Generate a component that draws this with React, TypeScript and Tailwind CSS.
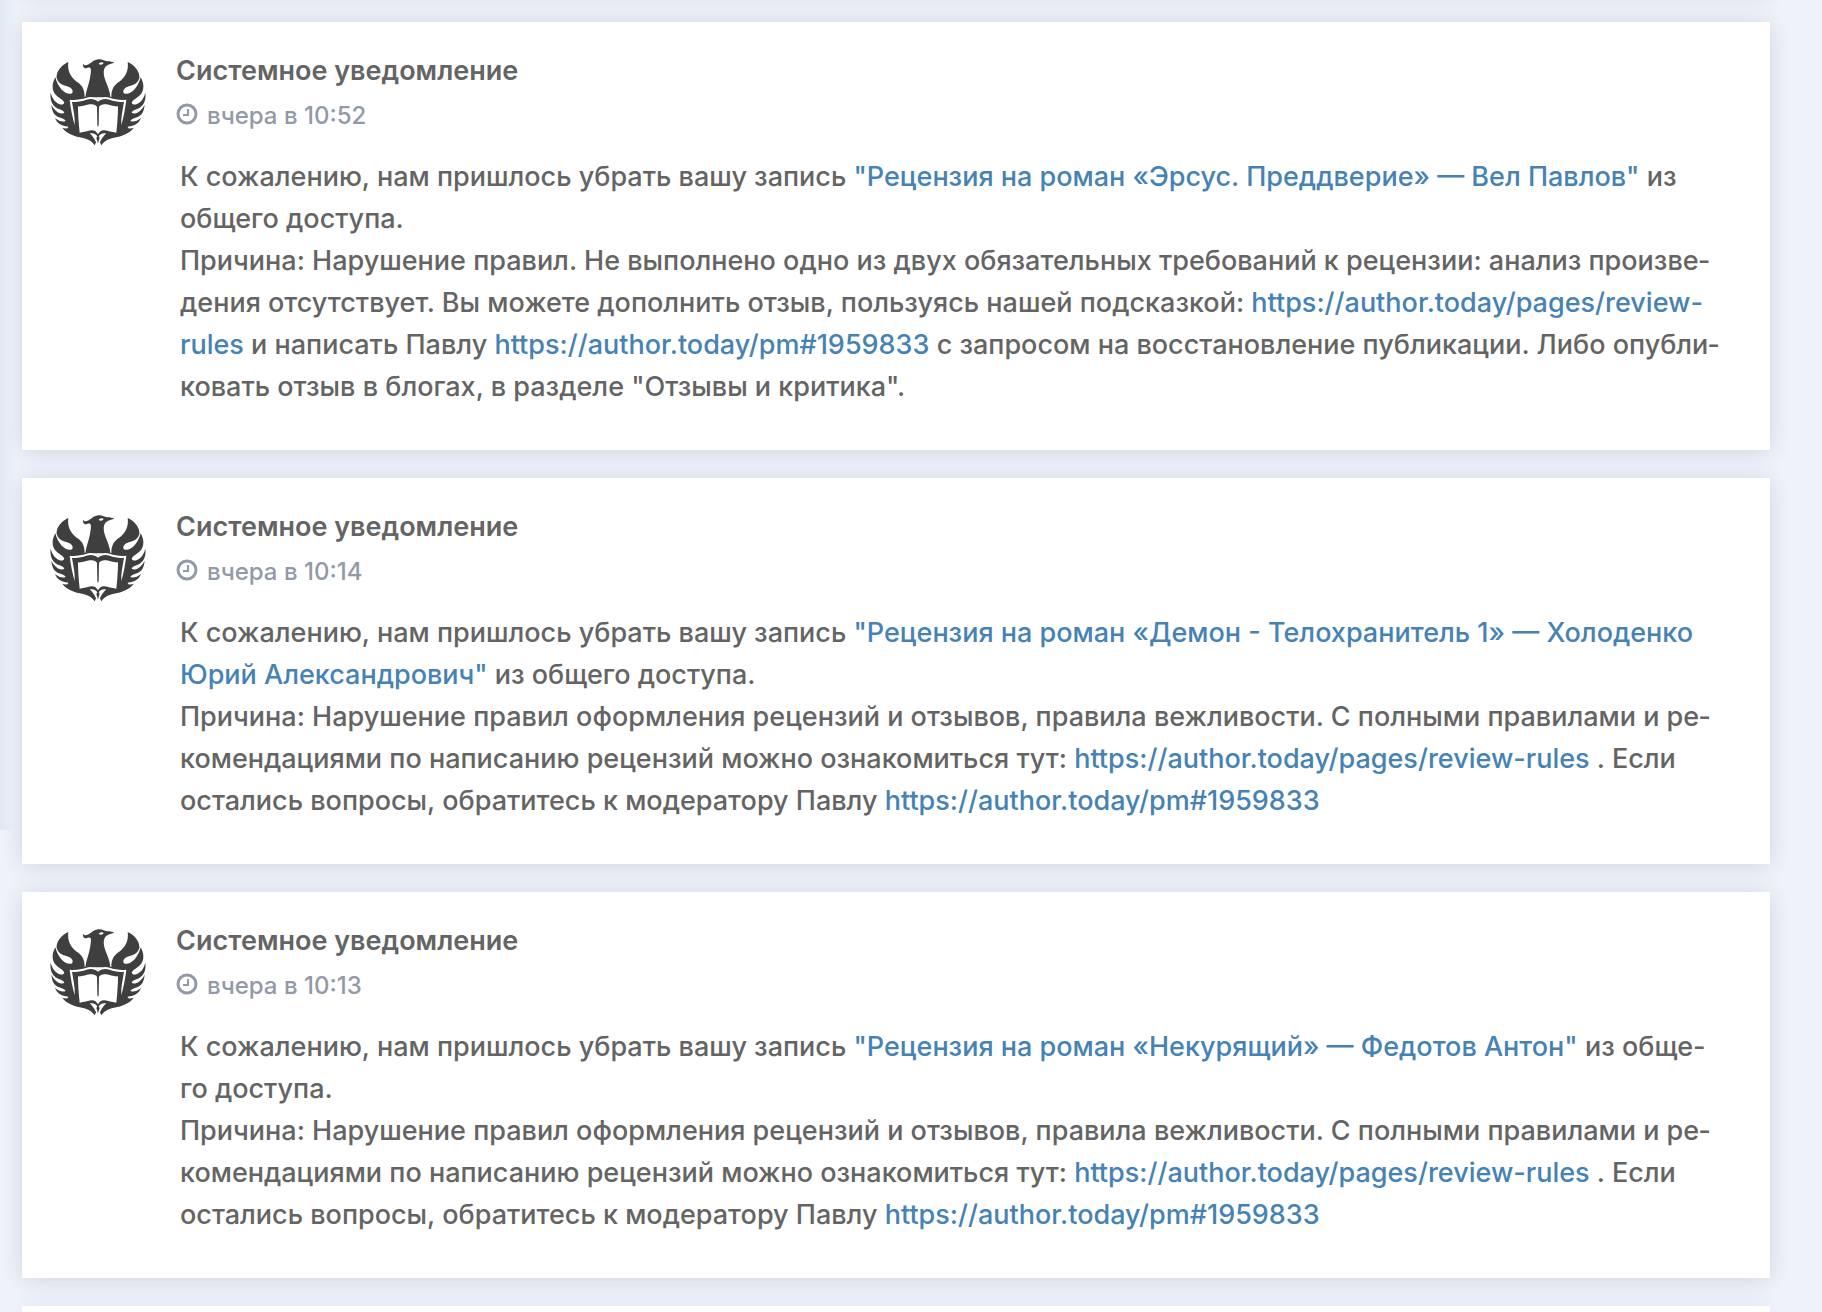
import type { ReactNode } from "react";

type Notice = {
  id: number;
  time: string;
  text: ReactNode;
};

function Link({ href, children }: { href: string; children: ReactNode }) {
  return (
    <a href={href} className="text-[#4682b4] hover:underline">
      {children}
    </a>
  );
}

const RULES = "https://author.today/pages/review-rules";
const PM = "https://author.today/pm#1959833";

const notices: Notice[] = [
  {
    id: 1,
    time: "вчера в 10:52",
    text: (
      <>
        К сожалению, нам пришлось убрать вашу запись{" "}
        <Link href="#post-1">"Рецензия на роман «Эрсус. Преддверие» — Вел Павлов"</Link> из общего
        доступа.
        <br />
        Причина: Нарушение правил. Не выполнено одно из двух обязательных требований к рецензии:
        анализ произве&shy;дения отсутствует. Вы можете дополнить отзыв, пользуясь нашей
        подсказкой: <Link href={RULES}>{RULES}</Link> и написать Павлу <Link href={PM}>{PM}</Link> с
        запросом на восстановление публикации. Либо опубли&shy;ковать отзыв в блогах, в разделе
        "Отзывы и критика".
      </>
    ),
  },
  {
    id: 2,
    time: "вчера в 10:14",
    text: (
      <>
        К сожалению, нам пришлось убрать вашу запись{" "}
        <Link href="#post-2">
          "Рецензия на роман «Демон - Телохранитель 1» — Холоденко Юрий Александрович"
        </Link>{" "}
        из общего доступа.
        <br />
        Причина: Нарушение правил оформления рецензий и отзывов, правила вежливости. С полными
        правилами и ре&shy;комендациями по написанию рецензий можно ознакомиться тут:{" "}
        <Link href={RULES}>{RULES}</Link> . Если остались вопросы, обратитесь к модератору Павлу{" "}
        <Link href={PM}>{PM}</Link>
      </>
    ),
  },
  {
    id: 3,
    time: "вчера в 10:13",
    text: (
      <>
        К сожалению, нам пришлось убрать вашу запись{" "}
        <Link href="#post-3">"Рецензия на роман «Некурящий» — Федотов Антон"</Link> из обще-
        <br />
        го доступа.
        <br />
        Причина: Нарушение правил оформления рецензий и отзывов, правила вежливости. С полными
        правилами и ре&shy;комендациями по написанию рецензий можно ознакомиться тут:{" "}
        <Link href={RULES}>{RULES}</Link> . Если остались вопросы, обратитесь к модератору Павлу{" "}
        <Link href={PM}>{PM}</Link>
      </>
    ),
  },
];

function Wing() {
  return (
    <path d="M84 36C62 46 47 66 49 84C54 99 64 105 78 108C95 112 102 125 93 131C76 135 54 116 45 82C34 102 34 121 46 134C54 143 66 147 71 156C74 163 64 166 56 162C44 156 36 146 31 128C28 150 36 165 48 173C58 179 70 180 72 188C66 194 46 190 33 164C35 186 42 195 54 201C62 205 72 206 76 212C70 218 56 214 44 204C50 220 62 227 84 230C84 236 76 237 66 233C78 250 98 257 118 262C138 266 152 270 163 286L174 262V150C158 138 146 140 133 141C133 122 128 110 115 99C94 86 80 66 84 36Z" />
  );
}

function PhoenixLogo() {
  return (
    <svg viewBox="29 24 288 264" className="h-[88px] w-24 shrink-0" aria-hidden="true">
      <g fill="#3f3f3f">
        <Wing />
        <g transform="matrix(-1 0 0 1 346 0)">
          <Wing />
        </g>
        <path d="M129 41C131 48 138 46 145 43C154 38 158 31 173 28C184 26 193 33 203 34C210 34 216 36 222 38C211 41 203 43 198 48C188 56 189 72 194 88C201 108 209 122 210 142H135C137 120 146 104 149 84C151 72 153 62 151 55C147 50 142 55 136 55C129 54 126 46 129 41Z" />
      </g>
      <g fill="#fff">
        <path d="M175 41C180 36 187 35 190 39C187 44 180 46 175 41Z" />
        {/* light edge around the book cover */}
        <path d="M88 149C106 151 122 148 138 143C152 139 166 142 173 149C180 142 194 139 208 143C224 148 240 151 258 149C255 176 250 200 243 226C241 204 247 180 251 155C236 157 222 154 208 149C194 145 182 147 173 155C164 147 152 145 138 149C124 154 110 157 95 155C99 180 105 204 103 226C96 200 91 176 88 149Z" />
        {/* pages */}
        <path d="M113 169C126 170 137 165 148 163C158 161 166 164 170 170L171 225L173 231L175 225L176 170C180 164 188 161 198 163C209 165 220 170 233 169C233 194 231 220 228 248C214 247 203 242 193 241C184 240 177 245 173 253C169 245 162 240 153 241C143 242 132 247 118 248C115 220 113 194 113 169Z" />
        {/* tail */}
        <path d="M173 262C167 252 160 248 148 250C156 258 168 272 170 287H176C178 272 190 258 198 250C186 248 179 252 173 262Z" />
      </g>
      <path d="M168 264C170 270 172 275 173 282C174 275 176 270 178 264L173 256Z" fill="#3f3f3f" />
    </svg>
  );
}

function ClockIcon() {
  return (
    <svg
      viewBox="0 0 22 22"
      className="mb-1 size-[22px]"
      fill="none"
      stroke="currentColor"
      aria-hidden="true"
    >
      <circle cx="11" cy="11" r="9" strokeWidth="3" />
      <path d="M12 6V12H7" strokeWidth="2" />
    </svg>
  );
}

function NoticeCard({ notice }: { notice: Notice }) {
  return (
    <article className="bg-white px-7 pt-7 pb-[42px] shadow-[0_2px_22px_rgba(0,0,0,0.12)]">
      <header className="flex gap-[30px]">
        <div className="flex h-[106px] items-start pt-2">
          <PhoenixLogo />
        </div>
        <div>
          <h2 className="text-[27px] leading-[42px] font-semibold text-[#646464]">
            Системное уведомление
          </h2>
          <p className="mt-[3px] flex items-center gap-[9px] text-2xl leading-[42px] font-medium text-[#9299a8]">
            <ClockIcon />
            <time>{notice.time}</time>
          </p>
        </div>
      </header>
      <p className="pl-[130px] text-[27px] leading-[42px] font-medium text-[#646464]">
        {notice.text}
      </p>
    </article>
  );
}

export default function App() {
  return (
    <main
      lang="ru"
      className="relative min-h-screen overflow-hidden bg-[#edf2fb] pr-[52px] pl-[22px] font-['Inter','Liberation_Sans',sans-serif]"
    >
      {/* shadow of the side menu */}
      <div className="absolute top-0 left-0 h-[830px] w-4 bg-linear-to-r from-[#e2e8f2] to-transparent" />
      <div className="-mt-[22px] flex flex-col gap-7">
        <div className="h-4 bg-white shadow-[0_2px_22px_rgba(0,0,0,0.12)]" />
        {notices.map((notice) => (
          <NoticeCard key={notice.id} notice={notice} />
        ))}
        <div className="h-[6px] bg-white shadow-[0_2px_22px_rgba(0,0,0,0.12)]" />
      </div>
    </main>
  );
}
